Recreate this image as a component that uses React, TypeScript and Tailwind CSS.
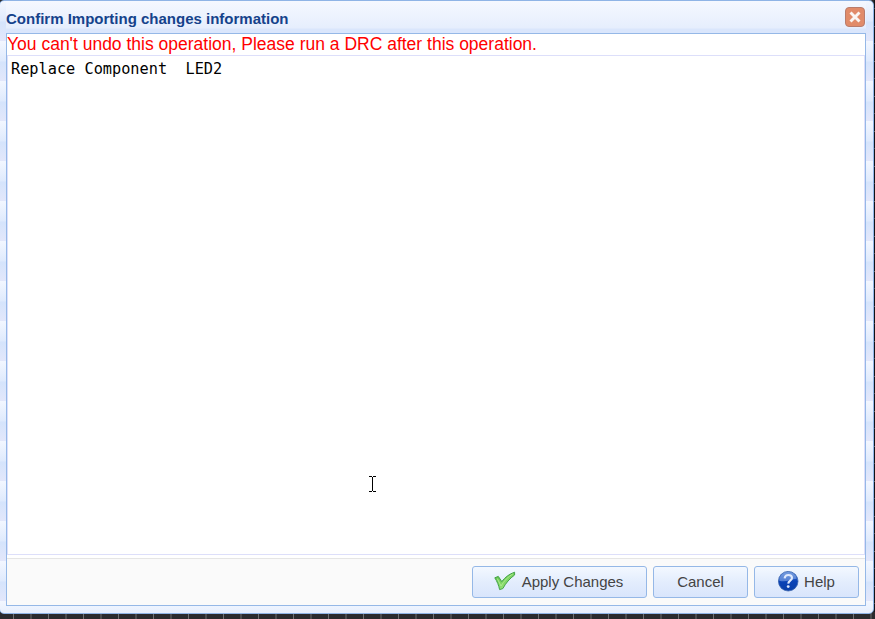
import React from "react";

const band = "bg-[repeating-linear-gradient(to_bottom,#f3f7ff_0px,#dfeafd_20px,#d5e4fc_21px,#e3e7fb_40px)]";

function DialogButton({ children, className }: { children: React.ReactNode; className: string }) {
  return (
    <button
      className={`flex h-8 items-center justify-center rounded-[3px] border border-[#95b8e7] bg-linear-to-b from-[#f3f8ff] via-[#e3edfd] via-50% to-[#d9e5fc] text-[15px] text-[#444] ${className}`}
    >
      {children}
    </button>
  );
}

function CheckIcon() {
  return (
    <svg width="22" height="20" viewBox="0 0 22 20" className="mr-[6px] mb-[2px]">
      <defs>
        <linearGradient id="check" x1="0" y1="0" x2="0.6" y2="1">
          <stop offset="0" stopColor="#4db83b" />
          <stop offset="1" stopColor="#a0e87e" />
        </linearGradient>
      </defs>
      <path d="M0.8 6.8 4.3 5.4 7.8 10.6C11.3 6 15.3 3 20.6 1.2V4C15.8 7.5 11.8 12 8.8 17.6L5.6 18.6C4.8 14.5 3.2 10.6 0.8 6.8Z" fill="url(#check)" stroke="#43a348" strokeWidth="1" />
      <path d="M3.3 7.5 7 15C10.3 9.5 13.8 6 18.8 3" fill="none" stroke="#aeea90" strokeWidth="1" />
    </svg>
  );
}

function HelpIcon() {
  return (
    <svg width="21" height="21" viewBox="0 0 21 21" className="mr-[5px] mb-[2px]">
      <defs>
        <linearGradient id="help" x1="0" y1="0" x2="0" y2="1">
          <stop offset="0" stopColor="#4f7fce" />
          <stop offset="0.5" stopColor="#0a43b7" />
          <stop offset="1" stopColor="#0a3fa8" />
        </linearGradient>
      </defs>
      <circle cx="10.2" cy="10.2" r="9.8" fill="url(#help)" stroke="#3a64ae" strokeWidth="0.8" />
      <path d="M1.2 9.7C1.7 3.7 5.7 1 10.2 1S18.2 4 18.7 7.7C12.7 7.7 8.7 11.7 1.2 9.7Z" fill="#9dbcf1" opacity="0.5" />
      <path d="M6.6 7.4C6.9 5 8.4 4 10.4 4 12.7 4 14 5.2 14 7 14 9.6 10.4 9.7 10.2 12.6" fill="none" stroke="#dfe9fc" strokeWidth="2.1" />
      <circle cx="10.2" cy="15.6" r="1.4" fill="#dfe9fc" />
    </svg>
  );
}

export default function App() {
  return (
    <div className="relative h-[619px] w-[875px] overflow-hidden bg-[#2b2b2e] bg-[repeating-linear-gradient(to_right,#2b2b2e_0px,#2b2b2e_13px,#707072_13px,#707072_14px,#2b2b2e_14px,#2b2b2e_30px,#4b4b4d_30px,#4b4b4d_32px,#2b2b2e_32px,#2b2b2e_35px)] font-['Liberation_Sans',Arial,sans-serif]">
      <div className="absolute top-0 right-0 h-[612px] w-px bg-[repeating-linear-gradient(to_bottom,#101216_0px,#101216_8px,#44484e_8px,#44484e_9px,#101216_9px,#101216_26px,#5c6066_26px,#5c6066_27px,#101216_27px,#101216_35px)]" />
      <div className={`relative ml-[-1px] flex h-[614px] w-[875px] flex-col rounded-[5px] border border-[#8fb4e6] pr-[7px] pb-[7px] pl-[6px] ${band}`}>
        <header className="flex h-8 shrink-0 items-center justify-between bg-[linear-gradient(to_bottom,#f5f8ff,#e6eefd_27px,#dae6fc_28px)]">
          <h1 className="mt-[3px] text-[15px] leading-5 font-bold text-[#15428b]">Confirm Importing changes information</h1>
          <button aria-label="Close" className="mr-px flex size-5 items-center justify-center rounded-[4px] border border-[#b97c6c] bg-[#e18b69]">
            <svg width="14" height="14" viewBox="0 0 14 14">
              <path d="M2.5 2.5 11.5 11.5M11.5 2.5 2.5 11.5" stroke="#faf6f3" strokeWidth="2.9" />
            </svg>
          </button>
        </header>
        <main className="flex min-h-0 flex-1 flex-col border border-[#95b8e7] bg-white">
          <p className="h-[21px] shrink-0 text-[17.5px] leading-[20px] whitespace-nowrap text-[#ff0000]">You can't undo this operation, Please run a DRC after this operation.</p>
          <pre className="h-[500px] shrink-0 border border-[#dddffa] px-[3px] pt-[3px] font-['DejaVu_Sans_Mono',monospace] text-[15.25px] leading-5 text-black">Replace Component  LED2</pre>
          <footer className="mt-[3px] flex flex-1 items-start justify-end gap-[6px] border-t border-[#e5e5e5] bg-[#fafafa] pt-[7px] pr-[6px]">
            <DialogButton className="w-[175px] pr-[2px]"><CheckIcon />Apply Changes</DialogButton>
            <DialogButton className="w-[95px]">Cancel</DialogButton>
            <DialogButton className="w-[105px]"><HelpIcon />Help</DialogButton>
          </footer>
        </main>
      </div>
      <svg className="absolute top-[476px] left-[368px]" width="9" height="17" viewBox="0 0 9 17" shapeRendering="crispEdges">
        <path d="M1 .5H4M5 .5H8M4.5 1V15M1 15.5H4M5 15.5H8" fill="none" stroke="black" />
      </svg>
    </div>
  );
}
